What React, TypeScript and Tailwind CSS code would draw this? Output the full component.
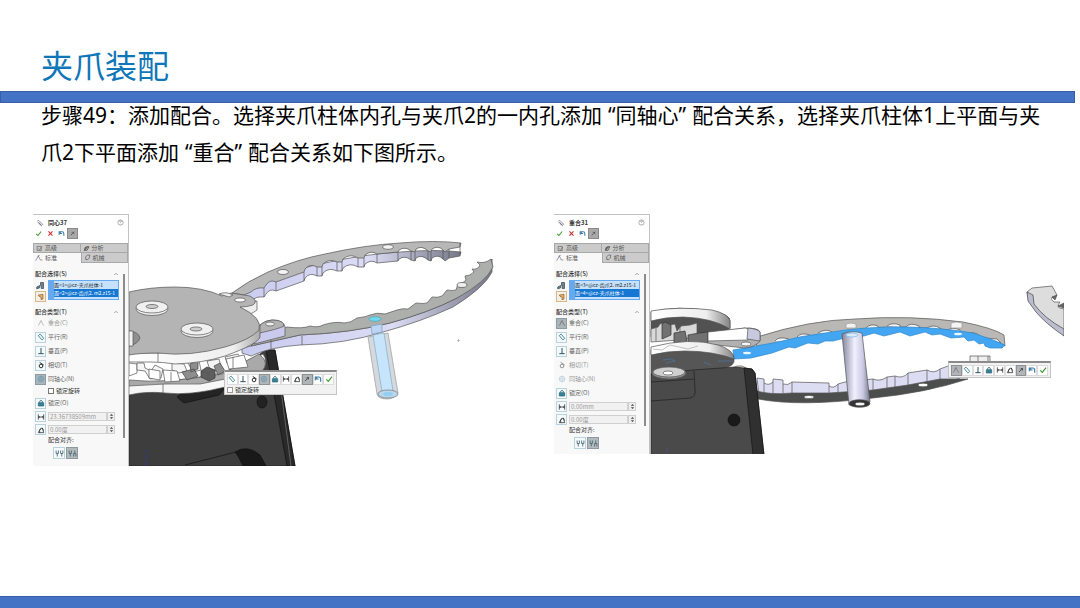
import React from "react";

type IconName =
  | "clip" | "check" | "cross" | "undo" | "pin" | "advanced" | "analysis" | "standard" | "mechanical"
  | "faces" | "multi" | "coincident" | "parallel" | "perpendicular" | "tangent" | "concentric" | "lock"
  | "distance" | "angle" | "aligned" | "antiAligned" | "help" | "chevron";

const glyphs: Record<IconName, React.ReactNode> = {
  clip: <path d="M2 3l2-1 6 6-2 2-5-5M4 6l4 4M3 4l5 5" stroke="#667" />,
  check: <path d="M2 6.500l3 3L10.500 2.500" stroke="#3f9a2e" strokeWidth="1.800" />,
  cross: <path d="M2.500 2.500l7 7M9.500 2.500l-7 7" stroke="#c9302c" strokeWidth="1.800" />,
  undo: <path d="M2 8V3h5q3 0 3 3v4M4 3v3h3" stroke="#3a7ca5" strokeWidth="1.800" />,
  pin: <path d="M3 9l3-3M5 4l3 3M6 3l3 3M7 5l2-2" stroke="#444" strokeWidth="1.300" />,
  advanced: <path d="M2 2.500h7v7H2zM4 6l2 2 4-5" stroke="#555" />,
  analysis: <path d="M2 9l4-6h4L7 9zM3 9l5-6M2 6l4-3" stroke="#444" strokeWidth="1.300" />,
  standard: <path d="M1 10l4-7 2 4 1 2h3M4 3l3-1" stroke="#667" />,
  mechanical: <path d="M3 9q-2-5 3-7h4q0 6-4 8zM3 9l1 1" stroke="#445" />,
  faces: <path d="M1 8l4-2v3L1 10.500zM6 2h4v8H7V6H6z" fill="#6d8290" stroke="#3e4d58" />,
  multi: <path d="M2 3l7-1v7L6 10V6L3 5z" fill="#e2b06c" stroke="#8a5a22" />,
  coincident: <path d="M2 10l4-7 4 7M4 4l3-2" stroke="#777" strokeWidth="1.300" />,
  parallel: <path d="M2 4l5 6M5 2l5 6M2 4q1-2 3-2M7 10q2 0 3-2" stroke="#2b7686" strokeWidth="1.300" />,
  perpendicular: <path d="M6 1.500V10M2 10h8" stroke="#2f5560" strokeWidth="1.500" />,
  tangent: (
    <g stroke="#333" strokeWidth="1.500">
      <circle cx="6" cy="7.500" r="2.700" />
      <path d="M4 2l6 4" />
    </g>
  ),
  concentric: (
    <g stroke="#5b8fae">
      <circle cx="6" cy="6" r="4.200" />
      <circle cx="6" cy="6" r="2" />
    </g>
  ),
  lock: (
    <g stroke="#245f73">
      <path d="M4 5V3.500q2-3 4 0V5" strokeWidth="1.300" />
      <path d="M2 5.500h8v5H2z" fill="#39839a" />
    </g>
  ),
  distance: <path d="M2 2v8M10 2v8M2 6h8M4 4.500L2.500 6 4 7.500M8 4.500L9.500 6 8 7.500" stroke="#333" strokeWidth="1.200" />,
  angle: <path d="M2 10h8L8 3 5 4zM4 10q-1-4 2-6M8 3l2 4" stroke="#333" strokeWidth="1.200" />,
  aligned: <path d="M1.500 2v4h3V2M3 6v4M7.500 2v4h3V2M9 6v4" stroke="#4d6a76" strokeWidth="1.200" />,
  antiAligned: <path d="M1.500 2v4h3V2M3 6v4M7.500 10V6h3v4M9 6V2" stroke="#4d6a76" strokeWidth="1.200" />,
  help: (
    <g stroke="#777">
      <circle cx="6" cy="6" r="4.500" />
      <path d="M4.500 5q0-2 1.500-2t1.500 1.500L6 6v1M6 8.500v.5" />
    </g>
  ),
  chevron: <path d="M2.500 8L6 4.500 9.500 8" stroke="#777" strokeWidth="1.300" />,
};

function Icon({ name, className = "size-2" }: { name: IconName; className?: string }) {
  return (
    <svg viewBox="0 0 12 12" fill="none" className={`${className} shrink-0`} aria-hidden="true">
      {glyphs[name]}
    </svg>
  );
}

type State = "normal" | "active" | "disabled";

interface MateRow {
  icon: IconName;
  label: string;
  state: State;
}

interface PanelProps {
  id: string;
  title: string;
  selections: [string, string];
  mates: MateRow[];
  lockRotation: boolean;
  distance: string;
}

function MateOption({ icon, label, state }: MateRow) {
  const box =
    state === "active"
      ? "border-[#8d9ba5] bg-[#a9b4bb]"
      : state === "disabled"
        ? "border-transparent opacity-50"
        : "border-[#b9d3dc] bg-[#f4fafc]";
  return (
    <button type="button" className="flex h-[14px] items-center gap-0.5 text-left">
      <span className={`flex size-[11px] items-center justify-center border ${box}`}>
        <Icon name={icon} />
      </span>
      <span className={state === "disabled" ? "text-[#999]" : "text-[#666]"}>{label}</span>
    </button>
  );
}

function NumberField({ id, icon, label, value }: { id: string; icon: IconName; label: string; value: string }) {
  return (
    <div className="flex h-[13px] items-center">
      <label htmlFor={id} aria-label={label} className="flex size-[11px] items-center justify-center border border-[#b9d3dc] bg-[#f4fafc]">
        <Icon name={icon} />
      </label>
      <input
        id={id}
        defaultValue={value}
        className="ml-0.5 h-[9px] w-[59px] min-w-0 border border-[#d0d0d0] bg-[#f1f1f1] px-px text-[#9a9a9a]"
      />
      <span className="flex h-[9px] w-2 items-center justify-center border border-[#cfcfcf] bg-[#eee]">
        <svg viewBox="0 0 6 8" className="h-[7px] w-[5px]" aria-hidden="true">
          <path d="M1 3l2-2 2 2zM1 5l2 2 2-2z" fill="#444" />
        </svg>
      </span>
    </div>
  );
}

function SectionTitle({ children }: { children: React.ReactNode }) {
  return (
    <div className="flex h-2 items-center justify-between font-medium text-[#333]">
      <span>{children}</span>
      <Icon name="chevron" className="size-[6px]" />
    </div>
  );
}

function MatePanel({ id, title, selections, mates, lockRotation, distance }: PanelProps) {
  return (
    <aside className="flex w-24 shrink-0 flex-col border-r border-t border-[#c2c2c2] bg-[#f8f8f8] text-[6px] leading-[8px] text-[#333]">
      <header className="flex h-[13px] items-center gap-1 bg-white pl-[3px] pr-1 pt-0.5">
        <Icon name="clip" />
        <h2 className="flex-1 font-bold text-[#333]">{title}</h2>
        <button type="button" aria-label="帮助">
          <Icon name="help" className="size-[7px]" />
        </button>
      </header>
      <div className="flex h-[11px] items-center bg-white">
        <button type="button" aria-label="确定" className="flex w-[11px] justify-center"><Icon name="check" className="size-[7px]" /></button>
        <button type="button" aria-label="取消" className="flex w-3 justify-center"><Icon name="cross" className="size-[7px]" /></button>
        <button type="button" aria-label="撤销" className="flex w-[11px] justify-center"><Icon name="undo" className="size-[7px]" /></button>
        <button type="button" aria-label="保持可见" className="flex size-[11px] items-center justify-center border border-[#8a8a8a] bg-[#a9a9a9]"><Icon name="pin" className="size-[7px]" /></button>
      </div>
      <nav className="grid grid-cols-2 bg-white pt-1 text-[#555]">
        <button type="button" className="flex h-[10px] items-center gap-0.5 border border-[#a8a8a8] bg-[#cbcbcb] px-0.5"><Icon name="advanced" className="size-[7px]" />高级</button>
        <button type="button" className="flex h-[10px] items-center gap-0.5 border-y border-r border-[#a8a8a8] bg-[#cbcbcb] px-0.5"><Icon name="analysis" className="size-[7px]" />分析</button>
        <button type="button" className="flex h-[10px] items-center gap-0.5 bg-[#f8f8f8] px-0.5"><Icon name="standard" />标准</button>
        <button type="button" className="flex h-[10px] items-center gap-0.5 border-x border-b border-[#a8a8a8] bg-[#cbcbcb] px-0.5"><Icon name="mechanical" className="size-[7px]" />机械</button>
      </nav>
      <div className="flex flex-1 justify-between pt-[7px]">
        <div className="w-[86px] pl-0.5">
          <SectionTitle>配合选择(S)</SectionTitle>
          <div className="mb-1.5 mt-0.5 flex gap-0.5">
            <div className="flex flex-col">
              <span className="flex size-[11px] items-center justify-center"><Icon name="faces" className="size-[9px]" /></span>
              <span className="flex size-[11px] items-center justify-center border border-[#d7b98c] bg-[#f4efe6]"><Icon name="multi" /></span>
            </div>
            <ul className="h-5 w-[71px] overflow-hidden whitespace-nowrap border border-l-[6px] border-[#67a9ef] bg-[#c5e1fb] text-[5px]">
              <li className="h-2 text-[#222]">{selections[0]}</li>
              <li className="h-2 bg-[#1677d2] text-white">{selections[1]}</li>
            </ul>
          </div>
          <SectionTitle>配合类型(T)</SectionTitle>
          <div className="flex flex-col">
            {mates.slice(0, 5).map((mate) => <MateOption key={mate.label} {...mate} />)}
            {lockRotation && (
              <label className="flex h-[10px] items-center gap-0.5 pl-[13px]">
                <input type="checkbox" className="size-[6px] appearance-none border border-[#777] bg-white" />
                锁定旋转
              </label>
            )}
            {mates.slice(5).map((mate) => <MateOption key={mate.label} {...mate} />)}
            <NumberField id={`${id}-distance`} icon="distance" label="距离" value={distance} />
            <NumberField id={`${id}-angle`} icon="angle" label="角度" value="0.00度" />
          </div>
          <p className="h-[9px] pl-[13px]">配合对齐:</p>
          <div className="flex gap-px pl-[18px] pt-0.5">
            <button type="button" aria-label="同向对齐" className="flex size-[12px] items-center justify-center border border-[#b9d3dc] bg-[#f4fafc]"><Icon name="aligned" className="size-[9px]" /></button>
            <button type="button" aria-label="反向对齐" className="flex size-[12px] items-center justify-center border border-[#8f9a9f] bg-[#b3babd]"><Icon name="antiAligned" className="size-[9px]" /></button>
          </div>
        </div>
        <div className="mb-7 mr-[3px] mt-1 w-0.5 bg-[#8c8c8c]" />
      </div>
    </aside>
  );
}

function MateToolbar({ icons, active }: { icons: IconName[]; active: number[] }) {
  return (
    <div role="toolbar" aria-label="配合" className="flex h-[14px] items-center justify-between px-0.5">
      {icons.map((icon, i) => (
        <button
          key={icon}
          type="button"
          aria-label={icon}
          className={`flex size-[11px] items-center justify-center border ${active.includes(i) ? "border-[#909090] bg-[#b0b6b8]" : "border-[#dcdcdc] bg-white"}`}
        >
          <Icon name={icon} />
        </button>
      ))}
    </div>
  );
}

const upperJaw =
  "M232 293Q248 281 268 272Q298 259 325 254Q365 245 400 243Q435 240 461 243L460 247L449 249L445 252L443 250Q438 245 432 249L431 252L428 251Q422 245 416 249L415 252L411 251Q405 246 399 250L398 252L377 254Q371 250 365 255L364 258L358 258Q350 253 343 259L342 262L337 262Q329 258 323 264L322 267L317 267Q310 263 305 269L304 272L276 282Q270 279 266 285L264 288Q256 287 251 292L244 295Z";

function GripperScene() {
  return (
    <svg viewBox="129 214 414 252" className="h-auto w-full" role="img" aria-label="夹爪与柱体同轴心配合">
      <defs>
        <linearGradient id="lavender" x1="0" x2="1">
          <stop offset="0" stopColor="#c9cbef" />
          <stop offset=".6" stopColor="#dcdcf5" />
          <stop offset="1" stopColor="#777788" />
        </linearGradient>
        <linearGradient id="rim" x1="0" x2="1">
          <stop offset="0" stopColor="#fff" />
          <stop offset=".8" stopColor="#eee" />
          <stop offset="1" stopColor="#aaa" />
        </linearGradient>
      </defs>
      <g stroke="#555" strokeWidth=".7" strokeLinejoin="round">
        <path d="M129 392L222 384 265 350H275L295 466H129Z" fill="#3d3d3d" stroke="#222" />
        <path d="M266 350H275L295 466H287Z" fill="#292929" stroke="#111" />
        <path d="M281 390L291 466" stroke="#777" />
        <path d="M177 397l7 6 35-8 6-7-43 5z" fill="#242424" stroke="#111" />
        <ellipse cx="262" cy="402" rx="5" ry="6" fill="#222" stroke="#111" />
        <path d="M185 465L236 452" fill="none" stroke="#111" />
        <path d="M235 452Q247 444 260 455L266 466H243L238 456Z" fill="#191919" stroke="#111" />
        <path d="M146 450v3M147 455v4M146 461v5" stroke="#3b32c4" />
        <path d="M129 383Q165 384 222 373L263 354Q270 362 258 377L225 387Q190 396 165 393Q145 391 129 395Z" fill="#f7f7f7" />
        <path d="M129 380Q165 384 222 374L259 354Q271 363 261 372L200 384Q165 383 129 386Z" fill="#a9a9a9" />
        <path d="M163 384V393" />
        <path d="M129 363l8 1v9l-8 3z" fill="#fff" />
        <path d="M137 363h7l1 5 6 3 4-6 8 4-2 9-11 1-5-8-8-1zM172 363l12 1 3 7-8 2-7-3zM188 363l11-2 2 9-8 2zM207 361l12-2 2 8-7 5-5-5zM225 357l13-3 4 6-6 7-9-4z" fill="#f5f5f5" />
        <path d="M149 369l11 2v9l-11-2zM163 370l14 1 3 10-15 1zM226 359l18-4 4 12-19 2z" fill="#fff" />
        <path d="M182 372l12-3 4 7-11 4zM190 364l8-3v8l-7 3zM214 366l6-3 5 8-7 4z" fill="#8d8d8d" stroke="#444" />
        <path d="M201 371l6-4 8 3v8l-6 3-8-4z" fill="#5e5e5e" stroke="#333" />
        <path d="M208 373v8M201 371l7 2 7-3M171 372v9M233 357v11" fill="none" />
        <path d={upperJaw} fill="url(#lavender)" transform="translate(0 9)" />
        <path d={upperJaw} fill="#b6b7b6" />
        <path d="M460 243v11M449 249v9M443 250v9M431 252v9M428 251v9M415 252v9M411 251v9M398 252v9M377 254v9M364 258v9M358 258v9M342 262v9M337 262v9M322 267v9M317 267v9M304 272v9M276 282v9M264 288v9" />
        <ellipse cx="283" cy="272" rx="5.500" ry="2.500" fill="#f4f4f4" />
        <ellipse cx="388" cy="247" rx="5.500" ry="2.300" fill="#f4f4f4" />
        <path d="M242 348L300 335Q350 333 390 323Q430 312 457 298Q486 282 492 259V272Q484 288 453 307Q420 322 383 332Q345 344 300 345Q270 347 251 356L242 353Z" fill="url(#lavender)" />
        <path d="M258 338L287 327Q303 329 310 326Q318 328 323 325Q335 321 344 323Q351 323 357 318Q366 317 370 315Q377 312 385 314Q391 312 397 310Q403 308 408 309L416 303Q423 304 427 303L432 297Q438 298 442 296L447 290Q453 291 456 290L458 284Q463 284 466 280L465 276Q470 276 474 272L472 269Q478 270 480 265L477 262Q485 264 491 259L493 267Q486 282 457 298Q430 312 390 323Q350 333 300 335L251 346Z" fill="#adafad" />
        <path d="M302 336v9M271 340v10" />
        <path d="M255 334Q259 321 272 320Q284 320 285 327V336L254 344Z" fill="#c9caee" />
        <path d="M255 334Q259 321 272 320Q284 320 284 326Q279 329 255 334Z" fill="#b3b3b3" />
        <ellipse cx="270" cy="324" rx="4.500" ry="2" fill="#eee" />
        <path d="M240 308v6q8 3 17-4v-9L244 301Z" fill="#eee" />
        <path d="M260 325V337Q258 344 225 356Q203 363 175 364Q163 362 150 362H129V353L158 353Q230 348 260 325Z" fill="url(#rim)" />
        <path d="M129 292Q150 287 175 287Q203 287 222 296L231 293 250 296Q259 301 253 305Q247 307 240 307Q263 318 259 330Q250 340 225 347Q190 357 158 353Q140 353 129 355Z" fill="#b4b4b4" />
        <path d="M158 353v9" />
        <path d="M219 294q7-3 14 1l-4 2z" fill="#eee" />
        <ellipse cx="240" cy="300" rx="5.500" ry="2" fill="#fff" />
        <g fill="#f0f0f0">
          <ellipse cx="152" cy="309" rx="16" ry="6.500" />
          <ellipse cx="152" cy="307" rx="16" ry="6" />
          <ellipse cx="152" cy="306.500" rx="6" ry="2" fill="#ccc" />
          <ellipse cx="197" cy="331" rx="16" ry="6.500" />
          <ellipse cx="197" cy="329" rx="16" ry="6" />
          <ellipse cx="196" cy="329" rx="6" ry="2" fill="#ccc" />
          <path d="M129 331Q139 332 140 338Q138 344 129 346Z" fill="#8f8f8f" />
          <path d="M129 331h4v15h-4z" />
        </g>
        <path d="M368 337L388 333 398 393Q394 399 387 399Q378 399 377 394Z" fill="#d4d9df" stroke="#999" />
        <path d="M373 335L384 333 393 391Q387 396 382 392Z" fill="#c6e4fb" stroke="#8ab" />
        <ellipse cx="388" cy="394" rx="10" ry="4" fill="#b9d6ea" stroke="#777" />
        <ellipse cx="388" cy="394" rx="5" ry="2" fill="#92cff0" stroke="none" />
        <path d="M371 326l11-2v8l-10 2z" fill="#bdd5f5" stroke="#7ba2c0" />
        <ellipse cx="375" cy="319" rx="6" ry="2.300" fill="#72d8f1" stroke="#4ba5b8" />
        <ellipse cx="462" cy="285" rx="5" ry="2.500" fill="#eee" />
        <path d="M457 340.500h3M458.500 339v3" stroke="#aaa" />
      </g>
    </svg>
  );
}

function SideScene() {
  return (
    <svg viewBox="650 214 414 240" className="h-auto w-full" role="img" aria-label="夹爪与柱体重合配合">
      <defs>
        <linearGradient id="pillar" x1="0" x2="1">
          <stop offset="0" stopColor="#85859b" />
          <stop offset=".45" stopColor="#f0f0ff" />
          <stop offset=".75" stopColor="#c9c9e2" />
          <stop offset="1" stopColor="#77778b" />
        </linearGradient>
        <linearGradient id="sideRim" x1="0" x2="1">
          <stop offset="0" stopColor="#fff" />
          <stop offset=".7" stopColor="#eee" />
          <stop offset="1" stopColor="#858585" />
        </linearGradient>
      </defs>
      <g stroke="#555" strokeWidth=".7" strokeLinejoin="round">
        <path d="M757 378L764 379V383Q769 386 773 382V379L783 380V384Q788 386 792 382V382L829 383V386Q834 389 838 384L845 382 873 379Q880 382 887 377L895 376Q903 379 908 373L927 370Q934 374 940 369L948 366 960 366V378L930 389Q870 400 812 401Q780 402 759 396Z" fill="#dcdcf2" />
        <path d="M757 391Q770 395 792 393L829 393 873 390 908 385 940 379H968Q925 393 873 398Q800 407 758 399Z" fill="#4c4d4d" />
        <path d="M764 383v10M773 382v11M783 384v9M792 382v11M829 386v7M838 384v9M873 379v11M887 377v11M895 376v11M908 373v12M927 370v12M940 369v11" />
        <ellipse cx="809" cy="397" rx="5" ry="1.500" fill="#fff" />
        <ellipse cx="923" cy="385" rx="5" ry="1.800" fill="#fff" />
        <path d="M757 337Q810 320 855 319Q910 315 963 322Q993 328 1004 335L1005 346Q980 333 940 329Q895 324 855 330L812 336 756 348Z" fill="#bab8b5" />
        <path d="M775 341q3-5 14-2v3M797 337q4-5 13-2v3M818 333q8-5 14-1v2M866 328q4-5 12-2v3M887 326q5-4 13-1v2M906 327q4-5 13-1v2M927 328q6-4 13 0v3M947 331q5-5 13-1v3M968 334q5-3 11 1v3M985 338l12 1 4 4-10-2z" fill="#f4f4f4" />
        <path d="M733 350Q762 345 778 342Q800 336 825 333Q865 326 907 327Q945 328 973 333Q992 339 1005 345L1002 348 990 348 985 346 984 343 979 344 974 340 968 341 964 337 951 338 940 334 932 335 925 332 910 336 900 332 884 336 874 333 864 336 845 338 833 341 825 341 818 344 808 343 795 348 789 347 772 353 751 358 734 359Z" fill="#42a6f2" stroke="#3186cc" />
        <ellipse cx="747" cy="353" rx="4" ry="1.300" fill="#e9f7ff" stroke="none" />
        <ellipse cx="958" cy="334" rx="4" ry="1.300" fill="#e9f7ff" stroke="none" />
        <path d="M846 324q5-2 10 0v4h-10zM951 323q5-2 11 0v5h-11z" fill="#f4f4f4" stroke="#999" />
        <path d="M651 312Q677 305 712 311Q731 315 730 321V328Q724 336 705 338L651 337Z" fill="#525252" />
        <path d="M651 311Q678 306 712 310Q729 314 730 321V329Q713 318 683 317Q665 317 651 321Z" fill="url(#sideRim)" />
        <path d="M651 329l7-2 2-3q4-2 5 1l3 5 1-5 6-1 2 7 4-5 9-1 7-2v14l-18 3-28 2z" fill="#d8d8d8" />
        <path d="M662 324l3-2 6 3v10l-9 4zM674 333l11-2 2 10-13 2zM688 335l11-2 9-1v12l-20 2z" fill="#717171" stroke="#333" />
        <path d="M698 325v8M656 328v13M680 325v8" />
        <path d="M708 333L745 328Q759 328 760 332V341Q755 347 745 348L708 344Z" fill="#b1b1b1" />
        <path d="M708 332L745 328Q752 328 748 340L708 341Z" fill="#fff" />
        <path d="M748 328Q758 329 760 332V341L747 339Z" fill="#c8c9df" />
        <ellipse cx="746" cy="344" rx="5" ry="2" fill="#f6f6f6" />
        <path d="M651 350Q690 338 718 347Q735 351 734 360Q736 370 695 372L651 374Z" fill="#565656" />
        <path d="M651 347Q690 337 718 345Q734 350 734 359Q713 351 685 351Q667 351 651 355Z" fill="url(#sideRim)" />
        <path d="M653 349l9 1 8-5 9 2 9 2 10-3" fill="none" stroke="#aaa" />
        <path d="M663 360l8-1 4 2-9 2M704 362l7 3M718 361h15" fill="none" stroke="#4779a7" />
        <path d="M733 368l4-2h5l6 3" fill="#e5d6c9" />
        <path d="M651 374L693 370 735 367 752 369 755 373 764 455H651Z" fill="#4a4a4a" stroke="#222" />
        <path d="M744 368L752 369 755 373 764 455H753Z" fill="#303030" stroke="#151515" />
        <path d="M651 401L690 398Q696 397 695 390L694 371M651 382l43-3" fill="none" stroke="#1f1f1f" />
        <ellipse cx="669" cy="373" rx="17" ry="6" fill="#8f8f8f" />
        <ellipse cx="669" cy="372" rx="16" ry="5" fill="#cfcfcf" />
        <ellipse cx="668" cy="373" rx="5" ry="2" fill="#fff" />
        <circle cx="734" cy="420" r="6" fill="#1a1a1a" stroke="#111" />
        <path d="M667 449v3" stroke="#5249c0" />
        <path d="M842 334Q851 330 862 333L870 402Q864 408 849 405Z" fill="url(#pillar)" />
        <ellipse cx="859.500" cy="403.500" rx="10.500" ry="3.800" fill="#333" />
        <ellipse cx="860" cy="404" rx="5" ry="1.800" fill="#f6f6f6" />
        <ellipse cx="852" cy="335" rx="6" ry="2" fill="#dbeaff" stroke="#6cb5ea" />
        <path d="M970 361v-5h20v5M978 356v5M988 356v5" fill="#eee" />
        <path d="M1027 292L1032 288 1052 286 1057 295Q1055 298 1052 297Q1050 299 1054 302L1060 302Q1056 307 1060 308L1064 309V334Q1046 323 1037 310L1029 300Z" fill="#deddde" />
        <path d="M1027 292L1033 295 1034 304Q1044 318 1064 329V336Q1045 323 1036 312L1028 301Z" fill="#bbbdce" stroke="#444" />
        <path d="M1052 297l5-2-2 5zM1058 306l6-3v5z" fill="#666" />
      </g>
    </svg>
  );
}

const leftMates: MateRow[] = [
  { icon: "coincident", label: "重合(C)", state: "disabled" },
  { icon: "parallel", label: "平行(R)", state: "normal" },
  { icon: "perpendicular", label: "垂直(P)", state: "normal" },
  { icon: "tangent", label: "相切(T)", state: "normal" },
  { icon: "concentric", label: "同轴心(N)", state: "active" },
  { icon: "lock", label: "锁定(O)", state: "normal" },
];

const rightMates: MateRow[] = [
  { icon: "coincident", label: "重合(C)", state: "active" },
  { icon: "parallel", label: "平行(R)", state: "normal" },
  { icon: "perpendicular", label: "垂直(P)", state: "normal" },
  { icon: "tangent", label: "相切(T)", state: "disabled" },
  { icon: "concentric", label: "同轴心(N)", state: "disabled" },
  { icon: "lock", label: "锁定(O)", state: "normal" },
];

export default function App() {
  return (
    <div className="flex min-h-screen flex-col bg-white font-['Noto_Sans','Noto_Sans_CJK_SC',sans-serif]">
      <header className="pb-[3px] pl-[41px] pt-10">
        <h1 className="font-['Noto_Sans_CJK_SC',sans-serif] text-[32px] leading-[48px] text-[#0f76b8]">夹爪装配</h1>
      </header>
      <div className="mr-[5px] h-3 border border-[#3a5ea5] bg-[#4472c4]" />
      <main className="flex-1">
        <p className="-mt-1.5 pl-[41px] pr-[30px] text-[21px] leading-[37px] text-black">
          步骤49：添加配合。选择夹爪柱体内孔与夹爪2的一内孔添加<span className="mx-1.5">“同轴心”</span>配合关系，选择夹爪柱体1上平面与夹
          <br />
          爪2下平面添加<span className="mx-1.5">“重合”</span>配合关系如下图所示。
        </p>
        <div className="mt-[43px] grid grid-cols-2 items-start gap-x-[11px] pl-[33px] pr-4 font-['Noto_Sans_CJK_SC',sans-serif]">
          <figure className="relative flex">
            <MatePanel
              id="concentric"
              title="同心37"
              selections={["面<1>@cz-夹爪柱体-1", "面<2>@cz-齿爪2. m2.z15-1"]}
              mates={leftMates}
              lockRotation
              distance="23.36738509mm"
            />
            <GripperScene />
            <div className="absolute left-[191px] top-[156px] w-[113px] border border-t-2 border-[#c4c4c4] border-t-[#8b8b8b] bg-[#f2f2f2] text-[6px] leading-[8px] text-[#333]">
              <MateToolbar icons={["parallel", "perpendicular", "tangent", "concentric", "lock", "distance", "angle", "pin", "undo", "check"]} active={[3, 7]} />
              <label className="flex h-2 items-center gap-0.5 pl-0.5">
                <input type="checkbox" className="size-[6px] appearance-none border border-[#999] bg-white" />
                锁定旋转
              </label>
            </div>
          </figure>
          <figure className="relative flex">
            <MatePanel
              id="coincident"
              title="重合31"
              selections={["面<3>@cz-齿爪2. m2.z15-1", "面<4>@cz-夹爪柱体-1"]}
              mates={rightMates}
              lockRotation={false}
              distance="0.00mm"
            />
            <SideScene />
            <div className="absolute left-[394px] top-[147px] w-[103px] border border-t-2 border-[#c4c4c4] border-t-[#8b8b8b] bg-[#f2f2f2]">
              <MateToolbar icons={["coincident", "parallel", "perpendicular", "lock", "distance", "angle", "pin", "undo", "check"]} active={[0, 6]} />
            </div>
          </figure>
        </div>
      </main>
      <footer className="h-3 border-t border-[#3a5ea5] bg-[#4472c4]" />
    </div>
  );
}
